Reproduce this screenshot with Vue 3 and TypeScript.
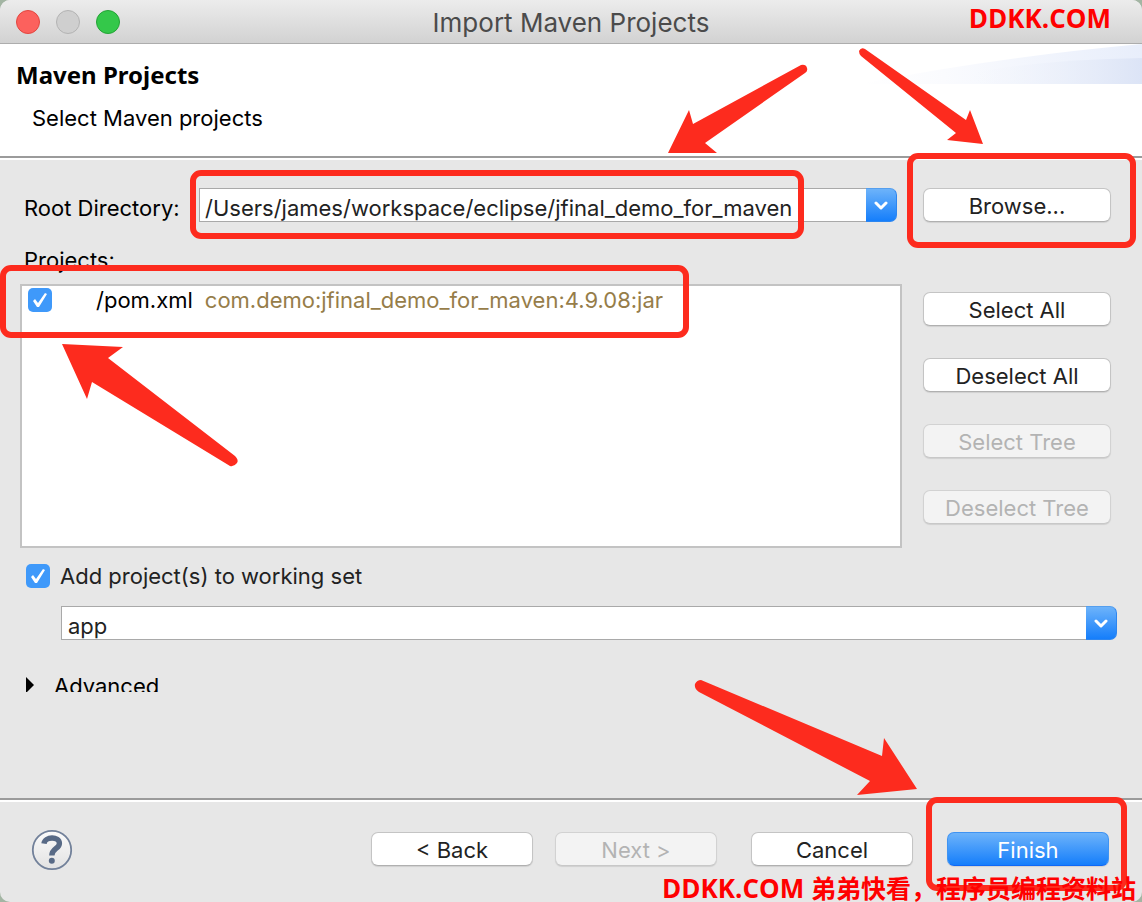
<script setup lang="ts">
import { ref } from 'vue'

interface SideAction {
  label: string
  disabled: boolean
}

const rootDirectory = ref('/Users/james/workspace/eclipse/jfinal_demo_for_maven')
const workingSet = ref('app')
const projectChecked = ref(true)
const addToWorkingSet = ref(true)
const advancedOpen = ref(false)

const sideActions: SideAction[] = [
  { label: 'Select All', disabled: false },
  { label: 'Deselect All', disabled: false },
  { label: 'Select Tree', disabled: true },
  { label: 'Deselect Tree', disabled: true },
]
</script>

<template>
  <div class="window">
    <header class="titlebar">
      <div class="lights">
        <button class="light close" type="button" aria-label="Close"></button>
        <button class="light minimize" type="button" aria-label="Minimize" disabled></button>
        <button class="light zoom" type="button" aria-label="Zoom"></button>
      </div>
      <div class="title">Import Maven Projects</div>
      <div class="watermark watermark-top">DDKK.COM</div>
    </header>

    <section class="banner">
      <svg class="banner-art" viewBox="0 0 282 40" width="282" height="40" aria-hidden="true">
        <defs>
          <linearGradient id="sweepLight" x1="0" x2="1" y1="0" y2="0">
            <stop offset="0" stop-color="#ffffff" />
            <stop offset="0.3" stop-color="#fafbfe" />
            <stop offset="1" stop-color="#e8eefb" />
          </linearGradient>
          <linearGradient id="sweepDeep" x1="0" x2="1" y1="0" y2="0">
            <stop offset="0" stop-color="#ffffff" stop-opacity="0" />
            <stop offset="1" stop-color="#dce4f6" />
          </linearGradient>
        </defs>
        <path d="M0 40 Q130 14 282 0 V40 Z" fill="url(#sweepLight)" />
        <path d="M60 40 Q150 16 282 14 V40 Z" fill="url(#sweepDeep)" />
      </svg>
      <h1>Maven Projects</h1>
      <p>Select Maven projects</p>
    </section>

    <main class="content">
      <div class="root-row">
        <label for="root-dir">Root Directory:</label>
        <div class="combo">
          <input id="root-dir" v-model="rootDirectory" type="text" spellcheck="false" />
          <button class="combo-arrow" type="button" aria-label="Show recent directories">
            <svg viewBox="0 0 14 9" width="14" height="9" aria-hidden="true"><path d="M2 2 L7 7 L12 2" /></svg>
          </button>
          <span class="mark mark-root"></span>
          <svg class="arrow arrow-root" viewBox="660 60 160 100" width="160" height="100" aria-hidden="true">
            <path d="M668 153 L689 110 L693 124 L801 65 Q806 64 807 68 Q808 71 805 73 L705 143 L717 153 Z" />
          </svg>
        </div>
        <div class="anchor">
          <button class="push" type="button">Browse...</button>
          <span class="mark mark-browse"></span>
          <svg class="arrow arrow-browse" viewBox="850 40 140 110" width="140" height="110" aria-hidden="true">
            <path d="M983 144 L970 110 L966 120 L865 49 Q861 47 859 51 Q859 54 861 56 L956 133 L947 140 Z" />
          </svg>
        </div>
      </div>

      <div id="projects-label" class="projects-label">Projects:</div>

      <div class="projects-row">
        <div class="anchor list-anchor">
          <div class="project-list" role="group" aria-labelledby="projects-label">
            <label class="project">
              <input v-model="projectChecked" class="check" type="checkbox" />
              <span class="project-file">/pom.xml</span>
              <span class="project-id">com.demo:jfinal_demo_for_maven:4.9.08:jar</span>
            </label>
          </div>
          <span class="mark mark-project"></span>
          <svg class="arrow arrow-project" viewBox="50 340 200 140" width="200" height="140" aria-hidden="true">
            <path d="M62 344 L123 347 L108 358 L235 456 Q239 460 237 463 Q234 467 230 466 L92 382 L87 399 Z" />
          </svg>
        </div>
        <div class="side-actions">
          <button
            v-for="action in sideActions"
            :key="action.label"
            class="push"
            type="button"
            :disabled="action.disabled"
          >{{ action.label }}</button>
        </div>
      </div>

      <label class="working-toggle">
        <input v-model="addToWorkingSet" class="check" type="checkbox" />
        <span>Add project(s) to working set</span>
      </label>

      <div class="combo working-combo">
        <input v-model="workingSet" type="text" aria-label="Working set" />
        <button class="combo-arrow" type="button" aria-label="Show working sets">
          <svg viewBox="0 0 14 9" width="14" height="9" aria-hidden="true"><path d="M2 2 L7 7 L12 2" /></svg>
        </button>
      </div>

      <button
        class="advanced"
        type="button"
        :aria-expanded="advancedOpen"
        @click="advancedOpen = !advancedOpen"
      >
        <svg viewBox="0 0 8 16" width="8" height="16" aria-hidden="true"><path d="M0 0 L8 8 L0 16 Z" /></svg>
        <span>Advanced</span>
      </button>
    </main>

    <footer class="footer">
      <button class="help" type="button" aria-label="Help">
        <svg viewBox="0 0 42 42" width="42" height="42" aria-hidden="true">
          <defs>
            <linearGradient id="helpFill" x1="0" x2="0" y1="0" y2="1">
              <stop offset="0" stop-color="#fbfbfb" />
              <stop offset="1" stop-color="#e2e2e2" />
            </linearGradient>
          </defs>
          <circle cx="21" cy="21" r="19.2" fill="url(#helpFill)" stroke="#72819a" stroke-width="1.8" />
          <path d="M13 14.6 C13.8 7.2 28.4 7 28.4 14.4 C28.4 19.6 20.8 19.4 20.8 26.6" fill="none" stroke="#586a86" stroke-width="5.4" />
          <circle cx="20.8" cy="31.8" r="3" fill="#586a86" />
        </svg>
      </button>
      <div class="nav">
        <button class="push" type="button">&lt; Back</button>
        <button class="push" type="button" disabled>Next &gt;</button>
      </div>
      <div class="finish-group">
        <button class="push" type="button">Cancel</button>
        <div class="anchor">
          <button class="push primary" type="submit">Finish</button>
          <span class="mark mark-finish"></span>
          <svg class="arrow arrow-finish" viewBox="690 670 240 130" width="240" height="130" aria-hidden="true">
            <path d="M917 789 L884 738 L882 756 L701 680 Q697 680 695 684 Q694 689 699 692 L870 781 L857 795 Z" />
          </svg>
        </div>
      </div>
      <div class="watermark watermark-bottom">DDKK.COM <span class="cjk">弟弟快看，程序员编程资料站</span></div>
    </footer>
  </div>
</template>

<style>
body {
  margin: 0;
  background: #a3b5a3;
}
</style>

<style scoped>
.window {
  position: relative;
  display: flex;
  flex-direction: column;
  box-sizing: border-box;
  min-height: 100vh;
  overflow: hidden;
  border-radius: 10px;
  background: #e7e7e7;
  color: #000;
  font-family: Inter, "Liberation Sans", "Noto Sans CJK SC", sans-serif;
  font-size: 22px;
  line-height: 28px;
}

button,
input {
  margin: 0;
  font: inherit;
  color: inherit;
}

.titlebar {
  position: relative;
  display: flex;
  align-items: center;
  justify-content: center;
  box-sizing: border-box;
  height: 44px;
  border-bottom: 1px solid #adadad;
  background: linear-gradient(#ececec, #d2d2d2);
}

.lights {
  position: absolute;
  left: 16px;
  top: 10px;
  display: flex;
  gap: 16px;
}

.light {
  box-sizing: border-box;
  width: 24px;
  height: 24px;
  padding: 0;
  border: 1px solid;
  border-radius: 50%;
}

.close {
  border-color: #e2463f;
  background: #fc615d;
}

.minimize {
  border-color: #b3b3b3;
  background: #cfcfcf;
}

.zoom {
  border-color: #24a336;
  background: #34c84a;
}

.title {
  padding-top: 2px;
  color: #4b4b4b;
  font-size: 26px;
}

.watermark {
  position: absolute;
  z-index: 3;
  color: #f00;
  font-family: "Open Sans", "Noto Sans CJK SC", sans-serif;
  font-size: 26px;
  font-weight: 700;
  line-height: 32px;
  white-space: nowrap;
}

.watermark .cjk {
  font-size: 25px;
}

.watermark-top {
  top: 2px;
  right: 31px;
}

.watermark-bottom {
  right: 6px;
  bottom: -2px;
}

.banner {
  position: relative;
  box-sizing: border-box;
  height: 114px;
  padding: 17px 16px 0;
  border-bottom: 2px solid #9b9b9b;
  box-shadow: 0 2px #fff;
  background: #fff;
}

.banner-art {
  position: absolute;
  top: 0;
  right: 0;
}

.banner h1 {
  position: relative;
  margin: 0;
  font-family: "Noto Sans", sans-serif;
  font-size: 24px;
  font-weight: 700;
  line-height: 28px;
}

.banner p {
  margin: 15px 0 0 16px;
}

.content {
  flex: 1;
  padding: 30px 25px 0 20px;
}

.root-row {
  display: flex;
  gap: 26px;
  padding-right: 6px;
}

.root-row label {
  width: 175px;
  margin: 6px -26px 0 4px;
  white-space: nowrap;
}

.anchor {
  position: relative;
}

.combo {
  position: relative;
  display: flex;
  flex: 1;
  height: 34px;
}

.combo input {
  flex: 1;
  box-sizing: border-box;
  min-width: 0;
  padding: 6px 6px 0 5px;
  border: 1px solid #a9a9a9;
  border-right: 0;
  border-radius: 0;
  outline: 0;
  background: #fff;
  color: #222;
}

.combo-arrow {
  display: flex;
  align-items: center;
  justify-content: center;
  box-sizing: border-box;
  width: 31px;
  padding: 0;
  border: 1px solid #2d86f0;
  border-top-color: #559fee;
  border-left: 0;
  border-radius: 0 7px 7px 0;
  background: linear-gradient(#6db3fa, #157efb);
}

.combo-arrow path {
  fill: none;
  stroke: #fff;
  stroke-width: 3;
  stroke-linecap: round;
  stroke-linejoin: round;
}

.push {
  display: block;
  box-sizing: border-box;
  width: 188px;
  height: 34px;
  padding: 2px 0 0;
  border: 1px solid #c4c4c4;
  border-bottom-color: #b0b0b0;
  border-radius: 7px;
  background: #fff;
  box-shadow: 0 1px 1px rgba(0, 0, 0, 0.1);
  color: #222;
  line-height: 28px;
  text-align: center;
  white-space: nowrap;
}

.push:disabled {
  border-color: #d2d2d2;
  border-bottom-color: #c8c8c8;
  background: #f3f3f3;
  color: #b3b3b3;
}

.push.primary {
  border-color: #3f93f2;
  border-bottom-color: #0f68f5;
  background: linear-gradient(#6db3fa, #157efb);
  color: #fff;
}

.projects-label {
  margin: 24px 0 10px 4px;
}

.projects-row {
  display: flex;
  gap: 21px;
  padding-right: 6px;
}

.list-anchor {
  flex: 1;
}

.project-list {
  box-sizing: border-box;
  height: 264px;
  border: 2px solid #c3c3c3;
  background: #fff;
}

.project {
  display: flex;
  align-items: center;
  padding: 0 6px;
}

.project-file {
  margin: 0 12px 0 44px;
}

.project-id {
  color: #967d49;
}

.check {
  appearance: none;
  flex: none;
  width: 24px;
  height: 24px;
  border-radius: 5px;
  background: #fff;
}

.check:checked {
  background: #3f99fa;
}

.check:checked::before {
  content: "";
  display: block;
  width: 24px;
  height: 24px;
  background: #fff;
  clip-path: polygon(5px 13px, 7px 11px, 10px 15px, 17px 5px, 19px 6px, 11px 19px, 9px 19px);
}

.side-actions {
  display: flex;
  flex-direction: column;
  gap: 32px;
  padding-top: 8px;
}

.working-toggle {
  display: flex;
  align-items: center;
  gap: 10px;
  margin: 14px 0 0 6px;
  color: #222;
}

.working-combo {
  margin: 16px 0 0 41px;
}

.working-combo input {
  padding-left: 6px;
}

.advanced {
  display: flex;
  gap: 20px;
  height: 24px;
  margin: 28px 0 0 6px;
  padding: 0;
  overflow: hidden;
  border: 0;
  background: none;
  line-height: 36px;
}

.advanced svg {
  margin-top: 9px;
}

.footer {
  position: relative;
  display: flex;
  align-items: flex-start;
  box-sizing: border-box;
  height: 104px;
  padding: 32px 33px 0 31px;
  border-top: 2px solid #9b9b9b;
  box-shadow: inset 0 2px #fff;
}

.footer .push {
  width: 162px;
}

.help {
  height: 42px;
  margin-top: -3px;
  padding: 0;
  border: 0;
  background: none;
}

.help svg {
  display: block;
}

.nav {
  display: flex;
  gap: 22px;
  margin-left: auto;
}

.finish-group {
  display: flex;
  gap: 34px;
  margin-left: 34px;
}

/* Callout frames and arrows laid over the controls they point at */
.mark {
  position: absolute;
  z-index: 2;
  box-sizing: border-box;
  border: 6px solid #fd2b1e;
  border-radius: 11px;
  pointer-events: none;
}

.mark-root {
  left: -9px;
  top: -18px;
  width: 614px;
  height: 69px;
}

.mark-browse {
  inset: -35px -25px -26px -16px;
}

.mark-project {
  left: -20px;
  top: -19px;
  width: 689px;
  height: 73px;
}

.mark-finish {
  inset: -35px -18px -25px -21px;
}

.arrow {
  position: absolute;
  z-index: 2;
  fill: #fd2b1e;
  pointer-events: none;
}

.arrow-root {
  left: 461px;
  top: -128px;
}

.arrow-browse {
  left: -73px;
  top: -148px;
}

.arrow-project {
  left: 30px;
  top: 56px;
}

.arrow-finish {
  left: -257px;
  top: -162px;
}
</style>
